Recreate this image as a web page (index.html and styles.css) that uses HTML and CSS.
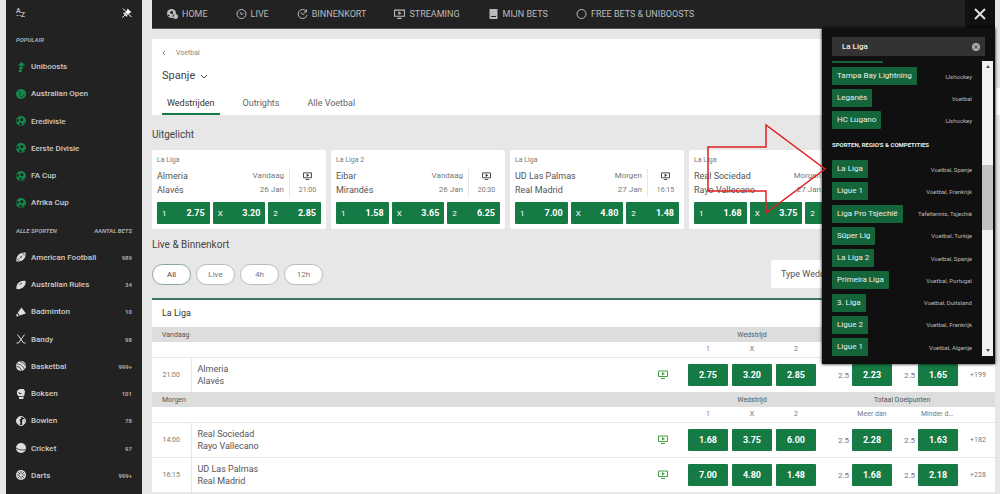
FILE: index.html
```
<!doctype html>
<html lang="nl">
<head>
 <meta charset="utf-8">
 <title>Spanje - Voetbal</title>
 <meta name="viewport" content="width=device-width, initial-scale=1">
 <link rel="stylesheet" href="styles.css">
</head>
<body>
<svg class="defs" aria-hidden="true">
 <symbol id="ball" viewBox="0 0 20 20">
  <circle cx="10" cy="10" r="10" fill="currentColor"/>
  <path class="cut" d="M10 4l4 1 1 4-4 2-3-3zM1 7l4-1 1 3-3 3-2-1zM6 13l5 1 1 5-4 0zM17 13l2-1-3 5-1-1z"/>
 </symbol>
 <symbol id="tennis" viewBox="0 0 20 20">
  <circle cx="10" cy="10" r="10" fill="currentColor"/>
  <path class="line" d="M5 3c4 2 5 7 2 10M8 15c4 2 8-1 8-5"/>
 </symbol>
 <symbol id="boost" viewBox="0 0 20 20">
  <path fill="currentColor" d="M11 0l8 7h-5v2H8V7H3zM7 10h7l-1 4H6zM6 15h6l-1 5H5z"/>
 </symbol>
 <symbol id="football" viewBox="0 0 20 20">
  <path fill="currentColor" d="M1 19C-1 9 7 0 19 1c2 11-6 19-18 18z"/>
  <path class="line" d="M2 13l5 5M13 2l5 5M7 13l6-6M8 9l3 3"/>
 </symbol>
 <symbol id="rugby" viewBox="0 0 20 20">
  <path fill="currentColor" d="M1 18C-1 9 8 0 19 2c2 9-7 18-18 16z"/>
  <path class="line" d="M7 9l5-3"/>
 </symbol>
 <symbol id="shuttle" viewBox="0 0 20 20">
  <path fill="currentColor" d="M11 1l9 12-13 4-4-5zM2 13l4 5-3 1c-3 0-3-4-1-6z"/>
  <path class="line" d="M3 12l4 6"/>
 </symbol>
 <symbol id="bandy" viewBox="0 0 20 20">
  <path class="stroke" d="M3 1l12 17h4M17 1L5 18H1"/>
 </symbol>
 <symbol id="basket" viewBox="0 0 20 20">
  <circle cx="10" cy="10" r="10" fill="currentColor"/>
  <path class="line" d="M2 6c7 0 13 4 15 12M1 11c5 0 9 3 10 9M7 1c6 1 10 4 12 9"/>
 </symbol>
 <symbol id="glove" viewBox="0 0 20 20">
  <path fill="currentColor" d="M2 4l5-4h8l3 4-1 8-2 3v5H6v-5l-4-4z"/>
  <path class="line" d="M6 15h9M6 6v3h5"/>
 </symbol>
 <symbol id="bowl" viewBox="0 0 20 20">
  <circle cx="10" cy="10" r="9" class="stroke"/>
  <path fill="currentColor" d="M1 7l6-6 4 3-4 4 2 5-2 5-5-5zM13 6l5 1-1 8-5 3z"/>
 </symbol>
 <symbol id="cricket" viewBox="0 0 20 20">
  <circle cx="10" cy="10" r="10" fill="currentColor"/>
  <path class="line" d="M0 10c6 4 13 5 19 3"/>
 </symbol>
 <symbol id="darts" viewBox="0 0 20 20">
  <circle cx="10" cy="10" r="10" fill="currentColor"/>
  <path class="line" d="M10 2v16M2 10h16M4 4l12 12M16 4L4 16"/>
  <circle cx="10" cy="10" r="3" fill="currentColor"/>
 </symbol>
 <symbol id="tv" viewBox="0 0 20 18">
  <path class="stroke" d="M1 2h18v11H1zM6 17h8"/>
  <path fill="currentColor" d="M8 4l6 3.500-6 3.500z"/>
 </symbol>
 <symbol id="clock" viewBox="0 0 20 20">
  <circle cx="10" cy="10" r="9" class="stroke"/>
  <path class="stroke" d="M7 6l3 5 4-2"/>
 </symbol>
 <symbol id="soon" viewBox="0 0 20 20">
  <path class="stroke" d="M17 4A9 9 0 1 0 19 12M18 1v5h-5M7 7l3 4 4-2"/>
 </symbol>
 <symbol id="ring" viewBox="0 0 20 20">
  <circle cx="10" cy="10" r="9" class="stroke"/>
 </symbol>
 <symbol id="slip" viewBox="0 0 20 20">
  <path fill="currentColor" d="M2 0h16v20H2z"/>
  <path class="cut" d="M5 14h10v2H5z"/>
 </symbol>
 <symbol id="balls" viewBox="0 0 22 20">
  <circle cx="9" cy="9" r="9" fill="currentColor"/>
  <circle cx="17" cy="15" r="5" fill="currentColor"/>
  <path class="cut" d="M8 4l4 1v4l-4 1-2-3zM1 11l4 1v3l-3-1zM11 14l2-3 2-1-3 7z"/>
 </symbol>
</svg>

<div class="shell">
 <aside class="sidebar">
  <div class="tools">
   <button class="sort" aria-label="Sorteren"><span>A</span><span>Z</span></button>
   <button class="pin" aria-label="Losmaken"><svg viewBox="0 0 20 20"><path fill="currentColor" d="M11 1l8 8-4 1-4 4-1 4-8-8 4-1 4-4z"/><path class="stroke" d="M6 14l-5 5"/><path class="line" d="M0 3l17 17"/><path class="stroke" d="M2 1l17 17"/></svg></button>
  </div>
  <h2>Populair</h2>
  <div class="menu">
   <a class="pop" href="#"><svg><use href="#boost"/></svg>Uniboosts</a>
   <a class="pop" href="#"><svg><use href="#tennis"/></svg>Australian Open</a>
   <a class="pop" href="#"><svg><use href="#ball"/></svg>Eredivisie</a>
   <a class="pop" href="#"><svg><use href="#ball"/></svg>Eerste Divisie</a>
   <a class="pop" href="#"><svg><use href="#ball"/></svg>FA Cup</a>
   <a class="pop" href="#"><svg><use href="#ball"/></svg>Afrika Cup</a>
   <h2><span>Alle sporten</span><span>Aantal bets</span></h2>
   <a href="#"><svg><use href="#football"/></svg>American Football<b>989</b></a>
   <a href="#"><svg><use href="#rugby"/></svg>Australian Rules<b>34</b></a>
   <a href="#"><svg><use href="#shuttle"/></svg>Badminton<b>10</b></a>
   <a href="#"><svg><use href="#bandy"/></svg>Bandy<b>98</b></a>
   <a href="#"><svg><use href="#basket"/></svg>Basketbal<b>999+</b></a>
   <a href="#"><svg><use href="#glove"/></svg>Boksen<b>101</b></a>
   <a href="#"><svg><use href="#bowl"/></svg>Bowlen<b>78</b></a>
   <a href="#"><svg><use href="#cricket"/></svg>Cricket<b>97</b></a>
   <a href="#"><svg><use href="#darts"/></svg>Darts<b>999+</b></a>
  </div>
 </aside>

 <main class="main">
  <nav class="topnav">
   <a href="#"><svg><use href="#balls"/></svg>HOME</a>
   <a href="#"><svg><use href="#clock"/></svg>LIVE</a>
   <a href="#"><svg><use href="#soon"/></svg>BINNENKORT</a>
   <a href="#"><svg><use href="#tv"/></svg>STREAMING</a>
   <a href="#"><svg><use href="#slip"/></svg>MIJN BETS</a>
   <a href="#"><svg><use href="#ring"/></svg>FREE BETS &amp; UNIBOOSTS</a>
   <button class="close" aria-label="Sluiten"><svg viewBox="0 0 12 12"><path class="stroke" d="M1 1l10 10M11 1L1 11"/></svg></button>
  </nav>

  <header class="head">
   <a class="crumb" href="#"><svg viewBox="0 0 4 6"><path class="thin" d="M3 1L1 3l2 2"/></svg>Voetbal</a>
   <h1><button class="region">Spanje<svg viewBox="0 0 8 5"><path class="thin" d="M1 1l3 3 3-3"/></svg></button></h1>
   <div class="tabs">
    <a class="on" href="#">Wedstrijden</a>
    <a href="#">Outrights</a>
    <a href="#">Alle Voetbal</a>
   </div>
  </header>

  <h2 class="title">Uitgelicht</h2>
  <div class="cards">
   <article class="card">
    <p class="comp">La Liga</p>
    <div class="info">
     <p class="teams">Almeria<br>Alavés</p>
     <p class="day">Vandaag<br>26 Jan</p>
     <p class="when"><svg><use href="#tv"/></svg>21:00</p>
    </div>
    <div class="odds"><button><i>1</i>2.75</button><button><i>X</i>3.20</button><button><i>2</i>2.85</button></div>
   </article>
   <article class="card">
    <p class="comp">La Liga 2</p>
    <div class="info">
     <p class="teams">Eibar<br>Mirandés</p>
     <p class="day">Vandaag<br>26 Jan</p>
     <p class="when"><svg><use href="#tv"/></svg>20:30</p>
    </div>
    <div class="odds"><button><i>1</i>1.58</button><button><i>X</i>3.65</button><button><i>2</i>6.25</button></div>
   </article>
   <article class="card">
    <p class="comp">La Liga</p>
    <div class="info">
     <p class="teams">UD Las Palmas<br>Real Madrid</p>
     <p class="day">Morgen<br>27 Jan</p>
     <p class="when"><svg><use href="#tv"/></svg>16:15</p>
    </div>
    <div class="odds"><button><i>1</i>7.00</button><button><i>X</i>4.80</button><button><i>2</i>1.48</button></div>
   </article>
   <article class="card">
    <p class="comp">La Liga</p>
    <div class="info">
     <p class="teams">Real Sociedad<br>Rayo Vallecano</p>
     <p class="day">Morgen<br>27 Jan</p>
     <p class="when"></p>
    </div>
    <div class="odds"><button><i>1</i>1.68</button><button><i>X</i>3.75</button><button><i>2</i></button></div>
   </article>
  </div>

  <h2 class="title live">Live &amp; Binnenkort</h2>
  <div class="filters">
   <button class="on">All</button>
   <button>Live</button>
   <button>4h</button>
   <button>12h</button>
   <select aria-label="Type weddenschap"><option>Type Weddenschap</option></select>
  </div>

  <section class="league">
   <h3>La Liga</h3>
   <table>
    <colgroup><col class="c-time"><col><col class="c-tv"><col class="c-odd"><col class="c-odd"><col class="c-odd"><col class="c-over"><col class="c-under"><col class="c-more"></colgroup>
    <tbody>
     <tr class="group"><th colspan="3">Vandaag</th><th colspan="3">Wedstrijd</th><th colspan="3"></th></tr>
     <tr class="sub"><td colspan="3"></td><th>1</th><th>X</th><th>2</th><th></th><th></th><td></td></tr>
     <tr class="match">
      <td class="time">21:00</td><td class="names">Almeria<br>Alavés</td><td class="tv"><svg><use href="#tv"/></svg></td>
      <td><button>2.75</button></td><td><button>3.20</button></td><td><button>2.85</button></td>
      <td class="line-odd">2.5<button>2.23</button></td><td class="line-odd">2.5<button>1.65</button></td><td class="more">+199</td>
     </tr>
    </tbody>
    <tbody>
     <tr class="group"><th colspan="3">Morgen</th><th colspan="3">Wedstrijd</th><th class="total" colspan="3">Totaal Doelpunten</th></tr>
     <tr class="sub"><td colspan="3"></td><th>1</th><th>X</th><th>2</th><th><span>Meer dan</span></th><th><span>Minder dan</span></th><td></td></tr>
     <tr class="match">
      <td class="time">14:00</td><td class="names">Real Sociedad<br>Rayo Vallecano</td><td class="tv"><svg><use href="#tv"/></svg></td>
      <td><button>1.68</button></td><td><button>3.75</button></td><td><button>6.00</button></td>
      <td class="line-odd">2.5<button>2.28</button></td><td class="line-odd">2.5<button>1.63</button></td><td class="more">+182</td>
     </tr>
     <tr class="match">
      <td class="time">16:15</td><td class="names">UD Las Palmas<br>Real Madrid</td><td class="tv"><svg><use href="#tv"/></svg></td>
      <td><button>7.00</button></td><td><button>4.80</button></td><td><button>1.48</button></td>
      <td class="line-odd">2.5<button>1.68</button></td><td class="line-odd">2.5<button>2.18</button></td><td class="more">+228</td>
     </tr>
    </tbody>
   </table>
  </section>

  <!-- search results, opened over the page -->
  <div class="search">
   <div class="field">
    <input type="text" value="La Liga" aria-label="Zoeken">
    <button aria-label="Wissen"><svg viewBox="0 0 10 10"><circle cx="5" cy="5" r="5" fill="currentColor"/><path class="thin x" d="M3 3l4 4M7 3L3 7"/></svg></button>
   </div>
   <div class="results">
    <div class="list">
     <ul>
      <li><a class="past" href="#" aria-label="Vorige"></a></li>
      <li><a href="#">Tampa Bay Lightning</a><span>IJshockey</span></li>
      <li><a href="#">Leganés</a><span>Voetbal</span></li>
      <li><a href="#">HC Lugano</a><span>IJshockey</span></li>
     </ul>
     <h3>SPORTEN, REGIO'S &amp; COMPETITIES</h3>
     <ul class="comps-list">
      <li><a href="#">La Liga</a><span>Voetbal, Spanje</span></li>
      <li><a href="#">Ligue 1</a><span>Voetbal, Frankrijk</span></li>
      <li><a href="#">Liga Pro Tsjechië</a><span>Tafeltennis, Tsjechië</span></li>
      <li><a href="#">Süper Lig</a><span>Voetbal, Turkije</span></li>
      <li><a href="#">La Liga 2</a><span>Voetbal, Spanje</span></li>
      <li><a href="#">Primeira Liga</a><span>Voetbal, Portugal</span></li>
      <li><a href="#">3. Liga</a><span>Voetbal, Duitsland</span></li>
      <li><a href="#">Ligue 2</a><span>Voetbal, Frankrijk</span></li>
      <li><a href="#">Ligue 1</a><span>Voetbal, Algerije</span></li>
     </ul>
    </div>
    <div class="bar"><i class="up"></i><i class="thumb"></i><i class="down"></i></div>
   </div>
  </div>
  <svg class="arrow" viewBox="0 0 120 92"><path d="M1 24h58V2l59 44-59 44V68H1z"/></svg>
 </main>
 <div class="rail"><div></div></div>
</div>
</body>
</html>
```
FILE: styles.css
```
* {box-sizing: border-box;}
body {margin: 0; background: #e7e7e7; color: #555; font-family: Roboto, "Liberation Sans", sans-serif; font-size: 9px;}
h1, h2, h3, p, ul {margin: 0; padding: 0; font-weight: normal;}
ul {list-style: none;}
a {color: inherit; text-decoration: none;}
button, input, select {font: inherit; color: inherit; border: 0; padding: 0; background: none;}
svg {display: block; flex: none;}
.defs {position: absolute; width: 0; height: 0;}
.stroke {fill: none; stroke: currentColor; stroke-width: 2;}
.thin {fill: none; stroke: currentColor; stroke-width: 1;}
.line {fill: none; stroke: #222; stroke-width: 1.5;}
.cut {fill: #222;}

.shell {
  display: flex;
  height: 100vh;
  padding-left: 6px;
  overflow: hidden;
}

/* left menu */
.sidebar {
  display: flex;
  flex-direction: column;
  flex: none;
  width: 136px;
  margin-right: 10px;
  padding: 0 10px 5px;
  background: #222;
  color: #ccc;
}
.tools {display: flex; justify-content: space-between; align-items: center; height: 26px;}
.sort {display: flex; font-size: 7px; font-weight: bold; line-height: 8px; color: #bbb;}
.sort span:first-child {border-bottom: 1px solid #777; height: 9px;}
.sort span:last-child {padding-top: 4px;}
.pin {color: #fff;}
.pin svg {width: 10px; height: 10px;}
.menu {
  flex: 1;
  display: grid;
  grid-auto-rows: 1fr;
}
.sidebar h2 {
  display: flex;
  justify-content: space-between;
  align-items: center;
  font-size: 6px;
  font-weight: bold;
  font-style: italic;
  text-transform: uppercase;
  color: #aaa;
}
.tools + h2 {height: 27px;}
.menu a {display: flex; align-items: center; font-size: 8px; font-weight: 500;}
.menu svg {width: 10px; height: 10px; margin-right: 5px; color: #ddd;}
.menu .pop svg {color: #128a4c;}
.menu b {margin-left: auto; font-size: 6px; color: #aaa;}

.main {position: relative; flex: 1; min-width: 0;}
.topnav {
  display: flex;
  align-items: center;
  gap: 28px;
  height: 29px;
  padding-left: 15px;
  background: #222;
  border-bottom: 1px solid #555;
  color: #bbb;
}
.topnav a {display: flex; align-items: center; gap: 4px; white-space: nowrap;}
.topnav a svg {width: 11px; height: 10px;}
.close {
  display: flex;
  align-items: center;
  justify-content: center;
  align-self: stretch;
  width: 30px;
  margin-left: auto;
  background: #101010;
  color: #ddd;
}
.close svg {width: 12px; height: 12px;}

.head {margin-top: 10px; padding: 9px 15px 0 10px; background: #fff;}
.crumb {display: flex; align-items: center; gap: 10px; font-size: 7px; line-height: 10px; color: #888;}
.crumb svg {width: 4px; height: 6px;}
.region {display: flex; align-items: center; gap: 5px; margin-top: 10px; font-size: 11px; line-height: 16px; color: #444;}
.region svg {width: 8px; height: 5px;}
.tabs {display: flex; gap: 18px; margin-top: 9px; color: #666;}
.tabs a {padding: 0 5px; line-height: 20px; border-bottom: 2px solid transparent;}
.tabs .on {color: #333; border-color: #157a43;}

.title {margin-top: 12px; font-size: 10px; line-height: 16px; color: #444;}
.cards {display: flex; gap: 5px; margin-top: 7px; overflow: hidden;}
.card {flex: none; width: 174px; padding: 5px; background: #fff; border-radius: 2px;}
.comp {font-size: 7px; line-height: 10px; color: #777;}
.info {display: flex; margin: 4px 0 5px; line-height: 14px;}
.day {margin-left: auto; padding-right: 5px; border-right: 1px solid #e7e7e7; font-size: 8px; text-align: right; color: #777;}
.when {width: 31px; padding-left: 4px; font-size: 7px; text-align: center; color: #777;}
.when svg {width: 9px; height: 8px; margin: 3px auto; color: #333;}
.odds {display: grid; grid-template-columns: repeat(3, 1fr); gap: 3px;}
.odds button, .match button {height: 22px; border-radius: 1px; background: #157a43; color: #fff; font-weight: bold;}
.odds button {display: flex; align-items: center; justify-content: space-between; padding: 0 5px;}
.odds i {font-size: 8px; font-style: normal; font-weight: normal;}

.live {margin-top: 8px;}
.filters {display: flex; align-items: center; gap: 5px; margin: 7px 0 10px;}
.filters button {width: 39px; height: 21px; border: 1px solid #bbb; border-radius: 11px; background: #fff; font-size: 8px; color: #777;}
.filters .on {border-color: #8aa898; color: #444;}
.filters select {appearance: none; width: 224px; height: 28px; margin-left: auto; padding-left: 10px; border-radius: 2px; background: #fff;}

.league {border-top: 2px solid #3c7a5e; background: #fff;}
.league h3 {padding-left: 10px; font-size: 9px; line-height: 27px; color: #333;}
.league table {width: 100%; table-layout: fixed; border-collapse: collapse;}
.league th, .league td {padding: 0; font-weight: normal;}
.c-time {width: 39px;}
.c-tv {width: 45px;}
.c-odd {width: 44px;}
.c-over {width: 77px;}
.c-under {width: 66px;}
.c-more {width: 34px;}
.group {height: 15px; background: #ddd; font-size: 7px; color: #555;}
.league .group th:first-child {padding-left: 10px; text-align: left;}
.league .group .total {padding-right: 9px;}
.sub {height: 15px; font-size: 7px; color: #777;}
.sub span {
  display: block;
  width: 40px;
  margin: 0 3px 0 auto;
  padding: 0 3px;
  overflow: hidden;
  text-overflow: ellipsis;
  white-space: nowrap;
}
.match {height: 35px; border-top: 1px solid #e7e7e7;}
.match td {text-align: center;}
.match .time {font-size: 7px; color: #777; border-right: 1px solid #e7e7e7;}
.match .names {padding-left: 6px; text-align: left; line-height: 12px;}
.tv svg {width: 10px; height: 9px; margin: auto; color: #44a044;}
.match button {width: 40px;}
.match .line-odd {padding-right: 3px; text-align: right; font-size: 8px; color: #777;}
.line-odd button {margin-left: 3px; font-size: 9px;}
.match .more {font-size: 7px; color: #777;}

/* search panel */
.search {
  position: absolute;
  top: 28px;
  right: 0;
  width: 173px;
  padding: 9px 2px 8px 10px;
  background: #101010;
  color: #eee;
  box-shadow: 0 0 3px #000;
}
.field {display: flex; align-items: center; height: 19px; margin-right: 8px; padding: 0 5px 0 10px; background: #333;}
.field input {flex: 1; min-width: 0; outline: none; font-size: 8px; font-weight: 500;}
.field svg {width: 8px; height: 8px; color: #aaa;}
.field .x {stroke: #333;}
.results {display: flex; height: 295px; margin-top: 5px;}
.list {
  flex: 1;
  display: flex;
  flex-direction: column;
  justify-content: flex-end;
  padding-right: 10px;
  overflow: hidden;
}
.list h3 {flex: none; font-size: 6px; font-weight: bold; line-height: 31px;}
.list ul {flex: none; display: grid; gap: 4px;}
.list .comps-list {height: 196px; gap: 0; align-content: space-between;}
.list li {display: flex; justify-content: space-between; align-items: center; font-size: 6px; color: #bbb;}
.list a {padding: 0 5px; border-radius: 1px; background: #14653a; color: #eee; font-size: 8px; line-height: 18px;}
.list .past {width: 51px; height: 18px;}
.bar {display: flex; flex-direction: column; align-items: center; width: 11px; padding: 4px 0; background: #f1f1f1;}
.bar i {border: 2px solid transparent;}
.bar .up {border-bottom: 3px solid #555; border-top: 0;}
.bar .down {border-top: 3px solid #555; border-bottom: 0; margin-top: auto;}
.bar .thumb {width: 11px; height: 65px; margin-top: 97px; border: 0; background: #c1c1c1;}

.arrow {position: absolute; left: 555px; top: 123px; width: 120px; height: 92px;}
.arrow path {fill: none; stroke: #e02020; stroke-width: 1.5;}

.rail {flex: none; width: 5px; padding: 88px 0 0 1px;}
.rail div {height: 27px; background: #fff;}
```
